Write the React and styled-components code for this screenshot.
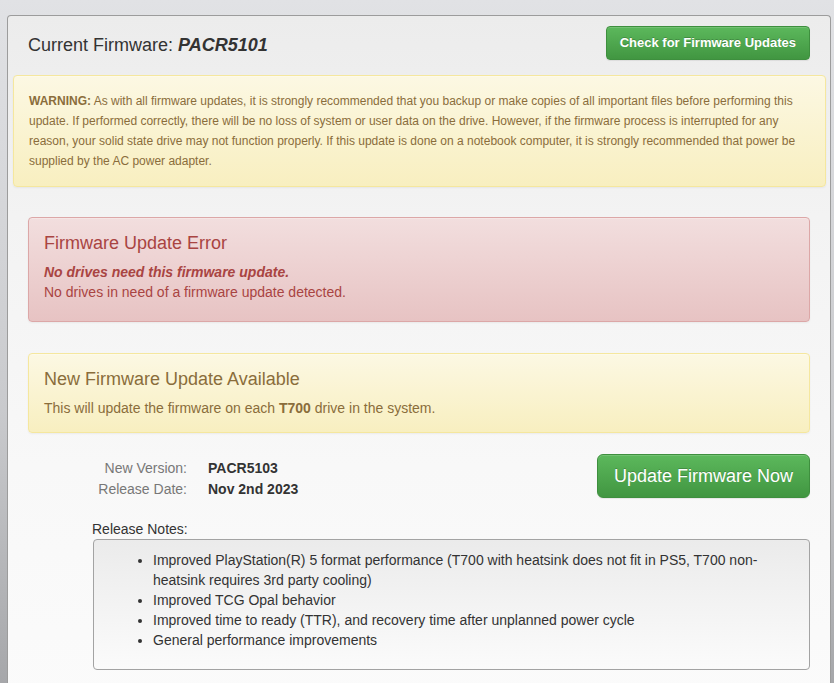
import styled, { createGlobalStyle } from "styled-components";

const GlobalStyle = createGlobalStyle`
	html, body {
		margin: 0;
		height: 100%;
	}
	body {
		background: linear-gradient(to bottom, #e1e2e5 0%, #c9cacd 60%, #a6a7aa 100%);
		font-family: "Liberation Sans", Arial, Helvetica, sans-serif;
		color: #333;
		overflow: hidden;
	}
`;

const notes = [
	"Improved PlayStation(R) 5 format performance (T700 with heatsink does not fit in PS5, T700 non-heatsink requires 3rd party cooling)",
	"Improved TCG Opal behavior",
	"Improved time to ready (TTR), and recovery time after unplanned power cycle",
	"General performance improvements",
];

export default function App() {
	return (
		<>
			<GlobalStyle />
			<Page>
				<Panel>
					<Header>
						<Title>
							Current Firmware: <em>PACR5101</em>
						</Title>
						<GreenButton>Check for Firmware Updates</GreenButton>
					</Header>

					<Alert kind="warning" wide>
						<WarnText>
							<strong>WARNING:</strong> As with all firmware updates, it is
							strongly recommended that you backup or make copies of all
							important files before performing this update. If performed
							correctly, there will be no loss of system or user data on the
							drive. However, if the firmware process is interrupted for any
							reason, your solid state drive may not function properly. If this
							update is done on a notebook computer, it is strongly recommended
							that power be supplied by the AC power adapter.
						</WarnText>
					</Alert>

					<Alert kind="danger" top={30} bottom={19}>
						<AlertTitle>Firmware Update Error</AlertTitle>
						<AlertText>
							<strong>
								<em>No drives need this firmware update.</em>
							</strong>
						</AlertText>
						<AlertText>No drives in need of a firmware update detected.</AlertText>
					</Alert>

					<Alert kind="warning" top={31} bottom={14}>
						<AlertTitle>New Firmware Update Available</AlertTitle>
						<AlertText>
							This will update the firmware on each <strong>T700</strong> drive
							in the system.
						</AlertText>
					</Alert>

					<InfoRow>
						<InfoGrid>
							<InfoLabel>New Version:</InfoLabel>
							<InfoValue>PACR5103</InfoValue>
							<InfoLabel>Release Date:</InfoLabel>
							<InfoValue>Nov 2nd 2023</InfoValue>
						</InfoGrid>
						<GreenButton big>Update Firmware Now</GreenButton>
					</InfoRow>

					<Notes>
						<NotesLabel>Release Notes:</NotesLabel>
						<NotesBox>
							<NotesList>
								{notes.map((note) => (
									<li key={note}>{note}</li>
								))}
							</NotesList>
						</NotesBox>
					</Notes>
				</Panel>
			</Page>
		</>
	);
}

const Page = styled.div`
	padding: 15px 3px 0 7px;
	height: 683px;
	box-sizing: border-box;
`;

const Panel = styled.div`
	border: 1px solid #9c9c9c;
	border-bottom: none;
	border-radius: 4px 4px 0 0;
	height: 700px;
	background: linear-gradient(to bottom, #ececec 0px, #f3f3f3 200px, #f8f8f8 450px, #fbfbfb 700px);
`;

const Header = styled.div`
	display: flex;
	justify-content: space-between;
	align-items: center;
	padding: 10px 20px 15px 20px;
`;

const Title = styled.h2`
	margin: 4px 0 0 0;
	font-size: 18px;
	font-weight: normal;
	color: #333;
	em {
		font-weight: bold;
		font-style: italic;
	}
`;

const GreenButton = styled.button`
	font-family: "Liberation Sans", Arial, sans-serif;
	font-size: ${(p) => (p.big ? "18px" : "13px")};
	font-weight: ${(p) => (p.big ? "normal" : "bold")};
	line-height: ${(p) => (p.big ? "22px" : "16px")};
	padding: ${(p) => (p.big ? "10px 16px" : "8px 13px")};
	color: #fff;
	background: linear-gradient(to bottom, #5cb85c 0%, #419641 100%);
	border: 1px solid #3e8f3e;
	border-radius: ${(p) => (p.big ? "6px" : "4px")};
	text-shadow: 0 -1px 0 rgba(0, 0, 0, 0.2);
	box-shadow: inset 0 1px 0 rgba(255, 255, 255, 0.15), 0 1px 1px rgba(0, 0, 0, 0.075);
	cursor: pointer;
`;

const alertColors = {
	warning: {
		bg: "linear-gradient(to bottom, #fcf8e3 0%, #f8efc0 100%)",
		border: "#f5e79e",
		color: "#8a6d3b",
	},
	danger: {
		bg: "linear-gradient(to bottom, #f2dede 0%, #e7c3c3 100%)",
		border: "#dca7a7",
		color: "#a94442",
	},
};

const Alert = styled.div`
	margin: ${(p) => (p.wide ? "0 4px 0 5px" : `${p.top}px 20px 0 20px`)};
	padding: 15px 15px ${(p) => (p.wide ? 15 : p.bottom)}px;
	background: ${(p) => alertColors[p.kind].bg};
	border: 1px solid ${(p) => alertColors[p.kind].border};
	border-radius: 4px;
	color: ${(p) => alertColors[p.kind].color};
	box-shadow: inset 0 1px 0 rgba(255, 255, 255, 0.25), 0 1px 2px rgba(0, 0, 0, 0.05);
`;

const WarnText = styled.p`
	margin: 0;
	font-size: 12px;
	line-height: 20px;
`;

const AlertTitle = styled.h3`
	margin: 0 0 9px 0;
	font-size: 18px;
	font-weight: normal;
	line-height: 20px;
`;

const AlertText = styled.p`
	margin: 0;
	font-size: 14px;
	line-height: 20px;
	strong {
		font-weight: bold;
	}
`;

const InfoRow = styled.div`
	display: flex;
	justify-content: space-between;
	align-items: flex-start;
	margin: 21px 20px 0 20px;
`;

const InfoGrid = styled.div`
	display: grid;
	grid-template-columns: 159px auto;
	column-gap: 21px;
	padding-top: 4px;
	font-size: 14px;
	line-height: 21px;
`;

const InfoLabel = styled.span`
	text-align: right;
	color: #777;
`;

const InfoValue = styled.span`
	font-weight: bold;
	color: #333;
`;

const Notes = styled.div`
	margin: 19px 20px 0 84px;
`;

const NotesLabel = styled.div`
	font-size: 14px;
	line-height: 20px;
	color: #333;
`;

const NotesBox = styled.div`
	margin-left: 1px;
	border: 1px solid #a3a3a3;
	border-radius: 4px;
	background: linear-gradient(to bottom, #ebebeb 0%, #fbfbfb 100%);
	padding: 10px 20px 19px 0;
`;

const NotesList = styled.ul`
	margin: 0;
	padding-left: 59px;
	font-size: 14px;
	line-height: 20px;
	color: #333;
`;
